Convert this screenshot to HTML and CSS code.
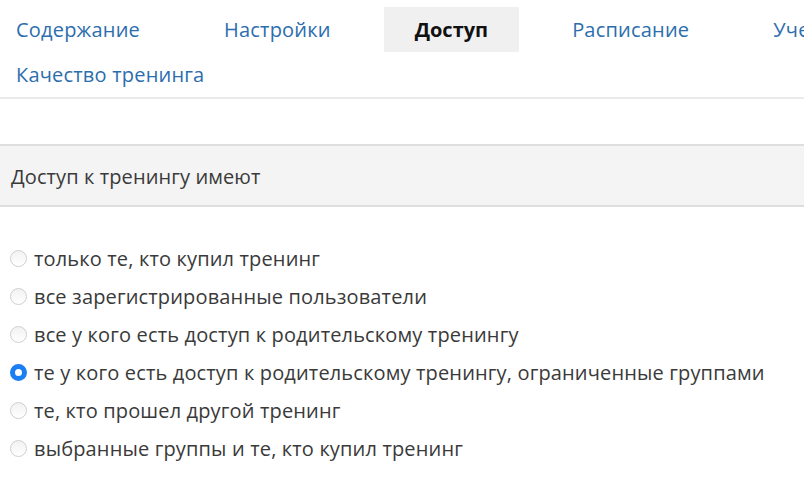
FILE: index.html
```html
<!DOCTYPE html>
<html lang="ru">
<head>
    <meta charset="UTF-8">
    <meta name="viewport" content="width=device-width, initial-scale=1.0">
    <title>Доступ</title>
    <link rel="stylesheet" href="styles.css">
</head>
<body>
    <div class="tabs">
        <a href="#" class="tab">Содержание</a>
        <a href="#" class="tab">Настройки</a>
        <a href="#" class="tab active">Доступ</a>
        <a href="#" class="tab">Расписание</a>
        <a href="#" class="tab">Ученики</a>
        <a href="#" class="tab">Качество тренинга</a>
    </div>

    <div class="section-title">Доступ к тренингу имеют</div>

    <form class="access-list">
        <label class="radio-row">
            <input type="radio" name="access" class="radio">
            <span>только те, кто купил тренинг</span>
        </label>
        <label class="radio-row">
            <input type="radio" name="access" class="radio">
            <span>все зарегистрированные пользователи</span>
        </label>
        <label class="radio-row">
            <input type="radio" name="access" class="radio">
            <span>все у кого есть доступ к родительскому тренингу</span>
        </label>
        <label class="radio-row">
            <input type="radio" name="access" class="radio" checked>
            <span>те у кого есть доступ к родительскому тренингу, ограниченные группами</span>
        </label>
        <label class="radio-row">
            <input type="radio" name="access" class="radio">
            <span>те, кто прошел другой тренинг</span>
        </label>
        <label class="radio-row">
            <input type="radio" name="access" class="radio">
            <span>выбранные группы и те, кто купил тренинг</span>
        </label>
    </form>
</body>
</html>
```

FILE: styles.css
```css
* {
    margin: 0;
    padding: 0;
    box-sizing: border-box;
}

body {
    font-family: 'Open Sans', 'Noto Sans', Arial, sans-serif;
    background: #fff;
    color: #333;
    overflow: hidden;
}

.tabs {
    display: flex;
    flex-wrap: wrap;
    column-gap: 22px;
    width: 940px;
    margin-left: -15px;
    padding-top: 7px;
    border-bottom: 2px solid #ebebeb;
}

.tab {
    display: block;
    height: 45px;
    line-height: 45px;
    padding: 0 31px;
    font-size: 20px;
    letter-spacing: 0.2px;
    color: #2c6ead;
    text-decoration: none;
}

.tab.active {
    background: #f0f0f0;
    color: #111;
    font-weight: 700;
    letter-spacing: 0;
}

.section-title {
    margin-top: 45px;
    padding: 0 11px;
    height: 63px;
    line-height: 61px;
    background: #f4f4f4;
    border-top: 2px solid #dedede;
    border-bottom: 2px solid #dedede;
    font-size: 20px;
    letter-spacing: 0.1px;
    color: #3a3a3a;
}

.access-list {
    padding: 32px 0 0 10px;
}

.radio-row {
    display: flex;
    align-items: center;
    height: 38px;
    font-size: 20px;
    letter-spacing: 0.15px;
    color: #3a3a3a;
}

.radio {
    appearance: none;
    flex-shrink: 0;
    width: 17px;
    height: 17px;
    margin-right: 7px;
    border-radius: 50%;
    border: 1px solid #cfcfcf;
    background: linear-gradient(#f2f2f2, #fff);
}

.radio:checked {
    border: 5px solid #1a7ff2;
    background: #fff;
}
```
